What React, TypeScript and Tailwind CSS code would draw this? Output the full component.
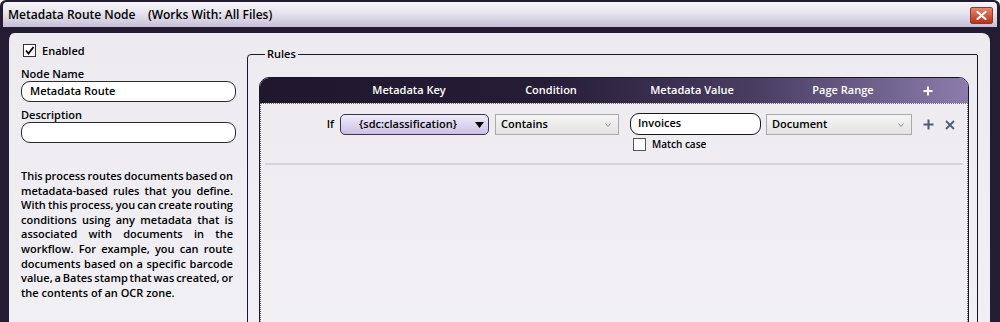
export default function App() {
  const lines = [
    "This process routes documents based on",
    "metadata-based rules that you define.",
    "With this process, you can create routing",
    "conditions using any metadata that is",
    "associated with documents in the",
    "workflow. For example, you can route",
    "documents based on a specific barcode",
    "value, a Bates stamp that was created, or",
  ];
  return (
    <div className="w-[1000px] h-[322px] overflow-hidden bg-[#231c33] rounded-tl-[6px] rounded-tr-[6px] flex flex-col [font-family:'Open_Sans',sans-serif] text-black font-semibold">
      {/* Title bar */}
      <div className="mt-[2px] mx-[3px] h-[25px] shrink-0 rounded-t-[4px] bg-[linear-gradient(to_bottom,#f7f6fa_0%,#e6e3ee_45%,#c6c0d8_100%)] flex items-center justify-between pl-[5px] pr-[4px]">
        <div className="text-[12px] leading-[16px] whitespace-pre text-black">
          {"Metadata Route Node    (Works With: All Files)"}
        </div>
        <div className="w-[23px] h-[17px] mt-[1px] rounded-[2px] border border-[#8c3a2c] bg-[linear-gradient(to_bottom,#e58a74_0%,#d05a42_50%,#b8321e_100%)] flex items-center justify-center">
          <svg width="11" height="9" viewBox="0 0 11 9">
            <path d="M1.5 1 L9.5 8 M9.5 1 L1.5 8" stroke="#fff" strokeWidth="2.2" strokeLinecap="round" />
          </svg>
        </div>
      </div>

      {/* Content */}
      <div className="mt-[6px] ml-[6px] mr-[10px] flex-1 rounded-t-[8px] bg-[linear-gradient(to_bottom,#edebf0_0%,#f1f0f4_100%)] flex px-[12px] pt-[11px] border-l-[3px] border-[#231c33]">
        {/* Left column */}
        <div className="w-[215px] shrink-0 flex flex-col">
          <div className="h-[13px] flex items-center">
            <div className="ml-[2px] w-[13px] h-[13px] border border-[#333] bg-white flex items-center justify-center">
              <svg width="11" height="11" viewBox="0 0 11 11">
                <path d="M2 5.5 L4.5 8.5 L9.5 2" stroke="#000" strokeWidth="1.8" fill="none" />
              </svg>
            </div>
            <span className="ml-[6px] text-[11px] leading-[14px]">Enabled</span>
          </div>
          <div className="mt-[10px] text-[11px] leading-[14px]">Node Name</div>
          <div className="h-[21px] rounded-[9px] border border-[#2a2a2a] bg-white pl-[8px] flex items-center text-[11px]">
            Metadata Route
          </div>
          <div className="mt-[6px] text-[11px] leading-[14px]">Description</div>
          <div className="h-[21px] rounded-[9px] border border-[#2a2a2a] bg-white" />
          <div className="mt-[26px] w-[212px] text-[11px] leading-[14.6px]">
            {lines.map((l) => (
              <div key={l} className="text-justify [text-align-last:justify] whitespace-nowrap flex justify-between">
                {l.split(" ").map((w, i) => (
                  <span key={i}>{w}</span>
                ))}
              </div>
            ))}
            <div>the contents of an OCR zone.</div>
          </div>
        </div>

        {/* Rules group */}
        <fieldset className="ml-[11px] mt-[3px] w-[731px] h-[320px] shrink-0 border border-[#1c1726] rounded-tl-[4px] rounded-tr-[2px] pl-[11px] pr-[8px]">
          <legend className="ml-[6px] px-[2px] text-[11px] leading-[14px]">Rules</legend>
          <div className="mt-[16px] w-[710px] h-[300px] border border-[#1b1626] rounded-t-[10px] overflow-hidden flex flex-col">
            {/* Header */}
            <div className="h-[25px] shrink-0 bg-[linear-gradient(to_right,#1e172d_0%,#251d36_40%,#4a3d62_70%,#8b7cad_100%)] flex items-center text-white text-[11px]">
              <div className="w-[89px]" />
              <div className="w-[120px] text-center">Metadata Key</div>
              <div className="ml-[22px] w-[120px] text-center">Condition</div>
              <div className="ml-[21px] w-[120px] text-center">Metadata Value</div>
              <div className="ml-[31px] w-[120px] text-center">Page Range</div>
              <div className="ml-[15px] w-[20px] flex justify-center">
                <svg width="10" height="10" viewBox="0 0 10 10">
                  <path d="M5 0.5 V9.5 M0.5 5 H9.5" stroke="#fff" strokeWidth="2" />
                </svg>
              </div>
            </div>
            {/* Body */}
            <div className="flex-1 border-t border-x border-dotted border-[#6a6a6a] bg-[linear-gradient(to_bottom,#eeecf1_0%,#f2f1f5_100%)]">
              <div className="h-[59px] flex items-start pt-[10px]">
                <div className="w-[73px] h-[21px] flex items-center justify-end text-[11px]">If</div>
                <div className="ml-[6px] w-[149px] h-[21px] rounded-[5px] border border-[#3a3248] bg-[linear-gradient(to_bottom,#efebf9_0%,#ddd6ef_50%,#cbc1e3_100%)] flex items-center text-[11px] relative">
                  <span className="w-[130px] text-center pl-[4px]">{"{sdc:classification}"}</span>
                  <svg className="absolute right-[4px] top-[7px]" width="9" height="6" viewBox="0 0 9 6">
                    <path d="M0 0 H9 L4.5 6 Z" fill="#000" />
                  </svg>
                </div>
                <div className="ml-[6px] w-[124px] h-[21px] border border-[#a9a9a9] bg-[linear-gradient(to_bottom,#f4f4f4_0%,#e4e4e4_100%)] flex items-center justify-between pl-[5px] pr-[7px] text-[11px]">
                  <span>Contains</span>
                  <svg width="6" height="4" viewBox="0 0 6 4">
                    <path d="M0.5 0.5 L3 3.5 L5.5 0.5" stroke="#8a8a8a" strokeWidth="1" fill="none" />
                  </svg>
                </div>
                <div className="ml-[11px] flex flex-col -mt-[1px]">
                  <div className="w-[131px] h-[22px] rounded-[9px] border border-[#1a1a1a] bg-white pl-[7px] text-[11px] leading-[17px]">
                    Invoices
                  </div>
                  <div className="mt-[3px] ml-[3px] flex items-center">
                    <div className="w-[13px] h-[13px] border border-[#555] bg-white" />
                    <span className="ml-[6px] text-[10px] leading-[13px]">Match case</span>
                  </div>
                </div>
                <div className="ml-[5px] w-[146px] h-[21px] border border-[#a9a9a9] bg-[linear-gradient(to_bottom,#f4f4f4_0%,#e4e4e4_100%)] flex items-center justify-between pl-[5px] pr-[7px] text-[11px]">
                  <span>Document</span>
                  <svg width="6" height="4" viewBox="0 0 6 4">
                    <path d="M0.5 0.5 L3 3.5 L5.5 0.5" stroke="#8a8a8a" strokeWidth="1" fill="none" />
                  </svg>
                </div>
                <div className="ml-[11px] h-[21px] flex items-center">
                  <svg width="11" height="11" viewBox="0 0 11 11">
                    <path d="M5.5 0.5 V10.5 M0.5 5.5 H10.5" stroke="#4e5b70" strokeWidth="2" />
                  </svg>
                </div>
                <div className="ml-[11px] h-[21px] flex items-center">
                  <svg width="10" height="10" viewBox="0 0 10 10">
                    <path d="M1 1 L9 9 M9 1 L1 9" stroke="#4e5b70" strokeWidth="1.8" />
                  </svg>
                </div>
              </div>
              <div className="mx-[4px] h-[2px] bg-[#d6d4dc]" />
            </div>
          </div>
        </fieldset>
      </div>
    </div>
  );
}
